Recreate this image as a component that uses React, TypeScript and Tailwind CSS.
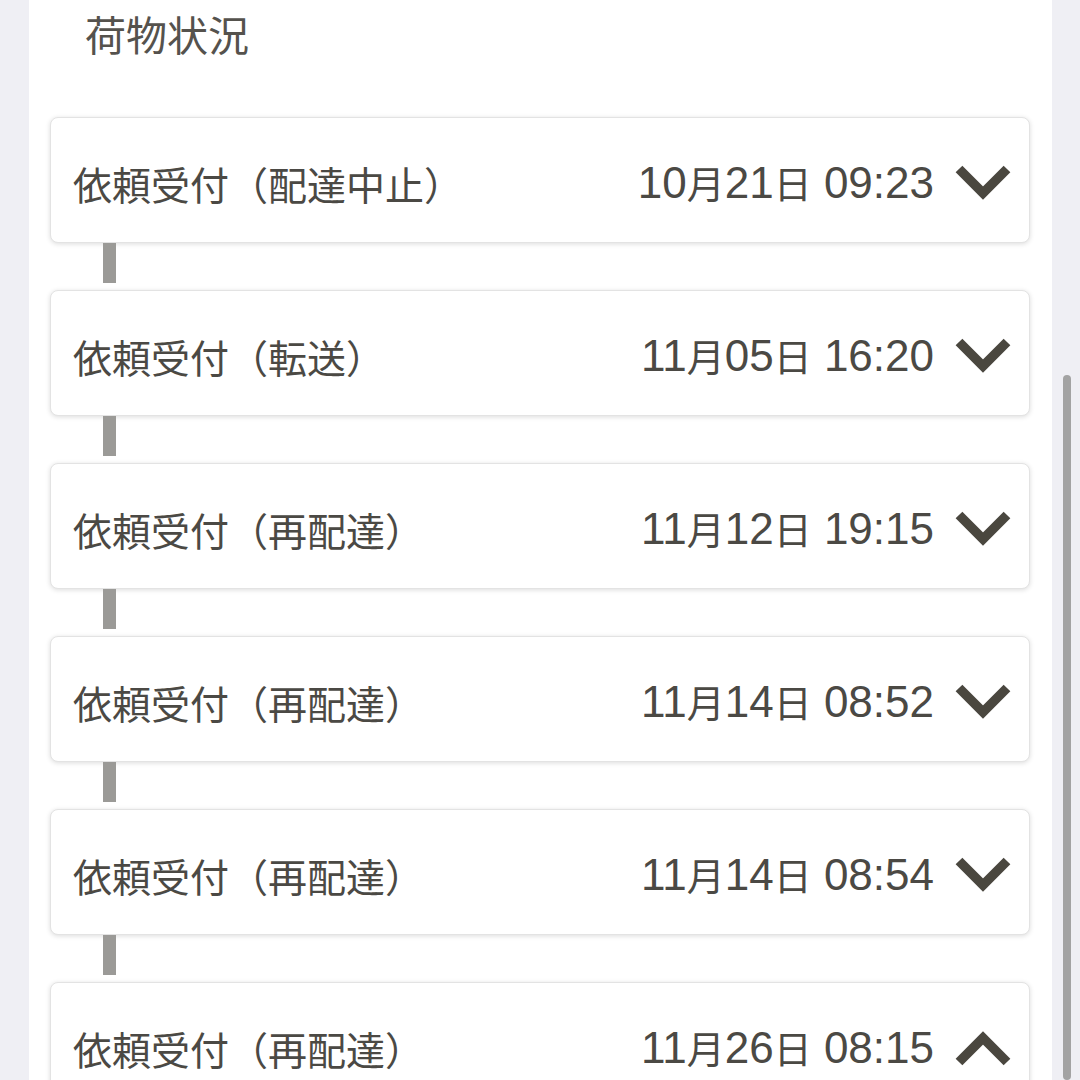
type Entry = {
  label: string;
  date: [string, string, string, string, string];
  open?: boolean;
};

// date parts: month, 月, day, 日, time
const entries: Entry[] = [
  { label: '依頼受付（配達中止）', date: ['10', '月', '21', '日', '09:23'] },
  { label: '依頼受付（転送）', date: ['11', '月', '05', '日', '16:20'] },
  { label: '依頼受付（再配達）', date: ['11', '月', '12', '日', '19:15'] },
  { label: '依頼受付（再配達）', date: ['11', '月', '14', '日', '08:52'] },
  { label: '依頼受付（再配達）', date: ['11', '月', '14', '日', '08:54'] },
  { label: '依頼受付（再配達）', date: ['11', '月', '26', '日', '08:15'], open: true },
];

function Chevron({ up }: { up?: boolean }) {
  return (
    <svg width="58" height="38" viewBox="0 0 58 38" className="shrink-0">
      <polyline
        points={up ? '5,33 29,9 53,33' : '5,5 29,29 53,5'}
        fill="none"
        stroke="#4a473f"
        strokeWidth="9.5"
        strokeLinejoin="miter"
      />
    </svg>
  );
}

function DateText({ parts }: { parts: Entry['date'] }) {
  const [m, mk, d, dk, t] = parts;
  return (
    <span
      className="mr-[20px] whitespace-nowrap text-[44px] leading-none text-[#4b4944]"
      style={{ fontFamily: '"Liberation Sans", "Noto Sans CJK JP", sans-serif' }}
    >
      {m}
      <span className="text-[38px]" style={{ fontFamily: '"Noto Sans CJK JP", sans-serif' }}>
        {mk}
      </span>
      {d}
      <span className="text-[38px]" style={{ fontFamily: '"Noto Sans CJK JP", sans-serif' }}>
        {dk}
      </span>{' '}
      {t}
    </span>
  );
}

export default function App() {
  return (
    <div
      className="flex h-[1080px] w-[1080px] overflow-hidden bg-[#efeff4]"
      style={{ fontFamily: '"Noto Sans CJK JP", "Noto Sans", sans-serif' }}
    >
      {/* left gutter */}
      <div className="w-[29px] shrink-0" />

      {/* main panel */}
      <div className="flex-1 bg-white">
        <h1 className="pl-[56px] pt-[13px] text-[41px] leading-none text-[#55524d]">荷物状況</h1>

        <div className="mt-[63px] ml-[21px] mr-[22px]">
          {entries.map((entry, i) => (
            <div key={i}>
              <div className="flex h-[126px] items-center rounded-[8px] border border-[#e3e3e3] bg-white pl-[22px] pr-[17px] pt-[6px] shadow-[0_1px_5px_rgba(0,0,0,0.14)]">
                <span className="flex-1 text-[39px] text-[#4b4944]">{entry.label}</span>
                <DateText parts={entry.date} />
                <Chevron up={entry.open} />
              </div>
              {i < entries.length - 1 && (
                <div className="ml-[53px] mb-[7px] h-[40px] w-[13px] bg-[#9b9a97]" />
              )}
            </div>
          ))}
        </div>
      </div>

      {/* right gutter with scrollbar */}
      <div className="flex w-[28px] shrink-0 justify-center pt-[375px]">
        <div className="ml-[2px] h-full w-[8px] rounded-full bg-[#a3a3a3]" />
      </div>
    </div>
  );
}
